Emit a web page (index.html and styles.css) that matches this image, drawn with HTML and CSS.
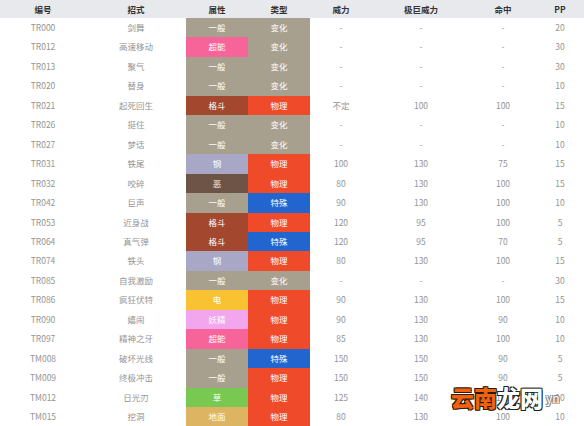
FILE: index.html
```html
<!DOCTYPE html>
<html lang="zh">
<head>
<meta charset="utf-8">
<link rel="stylesheet" href="styles.css">
</head>
<body>
<div class="wrap">
<table class="moves">
<colgroup>
<col class="c1"><col class="c2"><col class="c3"><col class="c4"><col class="c5"><col class="c6"><col class="c7"><col class="c8">
</colgroup>
<thead>
<tr><th>编号</th><th>招式</th><th>属性</th><th>类型</th><th>威力</th><th>极巨威力</th><th>命中</th><th>PP</th></tr>
</thead>
<tbody>
<tr><td>TR000</td><td>剑舞</td><td class="t normal">一般</td><td class="k status">变化</td><td>-</td><td>-</td><td>-</td><td>20</td></tr>
<tr><td>TR012</td><td>高速移动</td><td class="t psychic">超能</td><td class="k status">变化</td><td>-</td><td>-</td><td>-</td><td>30</td></tr>
<tr><td>TR013</td><td>聚气</td><td class="t normal">一般</td><td class="k status">变化</td><td>-</td><td>-</td><td>-</td><td>30</td></tr>
<tr><td>TR020</td><td>替身</td><td class="t normal">一般</td><td class="k status">变化</td><td>-</td><td>-</td><td>-</td><td>10</td></tr>
<tr><td>TR021</td><td>起死回生</td><td class="t fighting">格斗</td><td class="k physical">物理</td><td>不定</td><td>100</td><td>100</td><td>15</td></tr>
<tr><td>TR026</td><td>挺住</td><td class="t normal">一般</td><td class="k status">变化</td><td>-</td><td>-</td><td>-</td><td>10</td></tr>
<tr><td>TR027</td><td>梦话</td><td class="t normal">一般</td><td class="k status">变化</td><td>-</td><td>-</td><td>-</td><td>10</td></tr>
<tr><td>TR031</td><td>铁尾</td><td class="t steel">钢</td><td class="k physical">物理</td><td>100</td><td>130</td><td>75</td><td>15</td></tr>
<tr><td>TR032</td><td>咬碎</td><td class="t dark">恶</td><td class="k physical">物理</td><td>80</td><td>130</td><td>100</td><td>15</td></tr>
<tr><td>TR042</td><td>巨声</td><td class="t normal">一般</td><td class="k special">特殊</td><td>90</td><td>130</td><td>100</td><td>10</td></tr>
<tr><td>TR053</td><td>近身战</td><td class="t fighting">格斗</td><td class="k physical">物理</td><td>120</td><td>95</td><td>100</td><td>5</td></tr>
<tr><td>TR064</td><td>真气弹</td><td class="t fighting">格斗</td><td class="k special">特殊</td><td>120</td><td>95</td><td>70</td><td>5</td></tr>
<tr><td>TR074</td><td>铁头</td><td class="t steel">钢</td><td class="k physical">物理</td><td>80</td><td>130</td><td>100</td><td>15</td></tr>
<tr><td>TR085</td><td>自我激励</td><td class="t normal">一般</td><td class="k status">变化</td><td>-</td><td>-</td><td>-</td><td>30</td></tr>
<tr><td>TR086</td><td>疯狂伏特</td><td class="t electric">电</td><td class="k physical">物理</td><td>90</td><td>130</td><td>100</td><td>15</td></tr>
<tr><td>TR090</td><td>嬉闹</td><td class="t fairy">妖精</td><td class="k physical">物理</td><td>90</td><td>130</td><td>90</td><td>10</td></tr>
<tr><td>TR097</td><td>精神之牙</td><td class="t psychic">超能</td><td class="k physical">物理</td><td>85</td><td>130</td><td>100</td><td>10</td></tr>
<tr><td>TM008</td><td>破坏光线</td><td class="t normal">一般</td><td class="k special">特殊</td><td>150</td><td>150</td><td>90</td><td>5</td></tr>
<tr><td>TM009</td><td>终极冲击</td><td class="t normal">一般</td><td class="k physical">物理</td><td>150</td><td>150</td><td>90</td><td>5</td></tr>
<tr><td>TM012</td><td>日光刃</td><td class="t grass">草</td><td class="k physical">物理</td><td>125</td><td>140</td><td>100</td><td>10</td></tr>
<tr><td>TM015</td><td>挖洞</td><td class="t ground">地面</td><td class="k physical">物理</td><td>80</td><td>130</td><td>100</td><td>10</td></tr>
</tbody>
</table>
<div class="mark"><span class="mark-main">云南</span><span class="mark-alt">龙网</span><span class="mark-small">yn</span></div>
</div>
</body>
</html>
```
FILE: styles.css
```css
html, body {
  margin: 0;
  padding: 0;
  background: #ffffff;
}
body {
  font-family: "Noto Sans CJK SC", "Noto Sans", sans-serif;
  overflow: hidden;
}
.wrap {
  position: relative;
  width: 584px;
  height: 426px;
  overflow: hidden;
}
.moves {
  width: 584px;
  table-layout: fixed;
  border-collapse: collapse;
  border-spacing: 0;
}
.c1 { width: 86px; }
.c2 { width: 100px; }
.c3 { width: 62px; }
.c4 { width: 62px; }
.c5 { width: 62px; }
.c6 { width: 98px; }
.c7 { width: 66px; }
.c8 { width: 48px; }
.moves th {
  height: 18px;
  padding: 0;
  background: #e7e9ec;
  color: #333333;
  font-size: 8.5px;
  font-weight: bold;
  text-align: center;
  line-height: 18px;
}
.moves td {
  height: 19.45px;
  padding: 0;
  text-align: center;
  font-size: 8.5px;
  line-height: 19.45px;
  color: #949494;
  white-space: nowrap;
}
.moves td.t, .moves td.k {
  color: #ffffff;
}
.normal { background: #a8a08f; }
.psychic { background: #f6649a; }
.fighting { background: #a3472f; }
.steel { background: #a8a8c6; }
.dark { background: #6e5446; }
.electric { background: #f8c232; }
.fairy { background: #f2a6ee; }
.grass { background: #78c852; }
.ground { background: #dcb462; }
.status { background: #a8a08f; }
.physical { background: #ef4b2b; }
.special { background: #2365cf; }
.mark {
  position: absolute;
  left: 451px;
  top: 386px;
  display: flex;
  align-items: center;
  font-family: "Noto Sans CJK SC", sans-serif;
  font-weight: 900;
  font-size: 23px;
  line-height: 1;
}
.mark-main {
  color: #f0620f;
  text-shadow: -1px -1px 0 #2a1a10, 1px -1px 0 #2a1a10, -1px 1px 0 #2a1a10, 1px 1px 0 #2a1a10;
}
.mark-alt {
  color: #ffffff;
  text-shadow: -1px -1px 0 #222, 1px -1px 0 #222, -1px 1px 0 #222, 1px 1px 0 #222;
}
.mark-small {
  margin-left: 3px;
  font-size: 12px;
  font-weight: normal;
  color: #ffffff;
  text-shadow: -1px -1px 0 #888, 1px -1px 0 #888, -1px 1px 0 #888, 1px 1px 0 #888;
}
```
